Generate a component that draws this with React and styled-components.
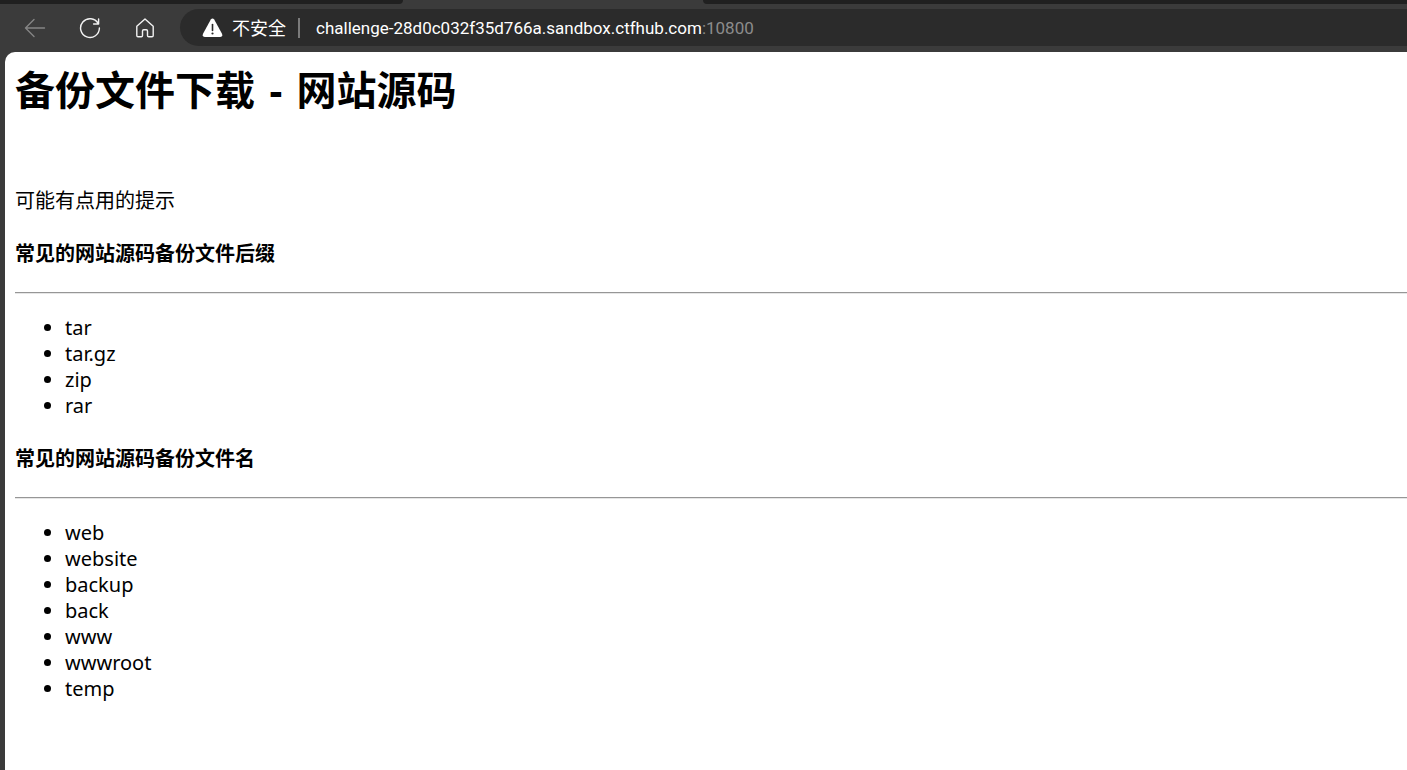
import React from 'react'
import styled, { createGlobalStyle } from 'styled-components'

const GlobalStyle = createGlobalStyle`
  * {
    box-sizing: border-box;
  }

  body {
    margin: 0;
    background: #3b3b3b;
    font-family: "Noto Sans", "Noto Sans CJK SC", sans-serif;
  }
`

const Window = styled.div`
  display: flex;
  flex-direction: column;
  min-height: 100vh;
  overflow: hidden;
`

const TabStrip = styled.div`
  display: flex;
  height: 4px;
`

const TabGap = styled.div`
  flex: ${({ $width }) => $width ? `0 0 ${$width}` : '1'};
  background: #202020;
  border-radius: ${({ $side }) => $side === 'left' ? '0 0 4px 0' : '0 0 0 4px'};
`

const ActiveTab = styled.div`
  flex: 0 0 300px;
`

const Toolbar = styled.nav`
  display: flex;
  align-items: center;
  height: 48px;
  padding: 0 0 1px 20px;
`

const ToolButton = styled.button`
  display: flex;
  align-items: center;
  justify-content: center;
  width: 30px;
  height: 31px;
  margin-right: 25px;
  padding: 0;
  border: 0;
  background: none;
  color: #f2f2f2;

  &:disabled {
    color: #858585;
  }
`

const AddressBar = styled.div`
  display: flex;
  flex: 1;
  align-items: center;
  height: 37px;
  margin-left: -5px;
  padding-left: 22px;
  border-radius: 19px 0 0 19px;
  background: #2b2b2b;
  color: #fff;
  font-size: 18px;
  line-height: 24px;
  white-space: nowrap;
`

const Security = styled.button`
  display: flex;
  align-items: center;
  gap: 9px;
  padding: 0;
  border: 0;
  background: none;
  color: #fff;
  font: inherit;
`

const Divider = styled.span`
  width: 2px;
  height: 20px;
  margin: 0 16px 0 12px;
  background: #7b7b7b;
`

const Url = styled.div`
  flex: 1;
  font-family: Roboto, sans-serif;
  font-size: 17px;
  outline: none;
`

const Port = styled.span`
  color: #8c8c8c;
`

const Page = styled.main`
  flex: 1;
  margin-left: 5px;
  padding: 11px 0 20px 10px;
  border-radius: 10px 0 0 0;
  background: #fff;
  color: #000;
  font-size: 20px;
  line-height: 26px;
`

const Title = styled.h1`
  margin: 0 0 71px;
  font-size: 40px;
  line-height: 54px;
`

const Dash = styled.span`
  margin: 0 4px;
`

const Hint = styled.p`
  margin: 0;
`

const SectionTitle = styled.h4`
  margin: 27px 0 25px;
  font-size: 20px;
`

const Rule = styled.hr`
  height: 2px;
  margin: 0 0 21px;
  border: 0;
  border-top: 1px solid #969696;
  border-bottom: 1px solid #e6e6e6;
`

const List = styled.ul`
  margin: 0;
  padding-left: 50px;
`

const suffixes = ['tar', 'tar.gz', 'zip', 'rar']
const names = ['web', 'website', 'backup', 'back', 'www', 'wwwroot', 'temp']

const Icon = ({ children }) => <svg
  width="22"
  height="22"
  viewBox="0 0 22 22"
  fill="none"
  stroke="currentColor"
  strokeWidth="1.4"
  strokeLinecap="round"
  strokeLinejoin="round"
  aria-hidden="true">
  {children}
</svg>

const BackIcon = () => <Icon>
  <path d="M10 2.5 1.5 11l8.5 8.5M1.5 11H20.5"/>
</Icon>

const ReloadIcon = () => <Icon>
  <path d="M19.2 6.5A9.4 9.4 0 1 0 20.4 11M19.6 2v5h-5"/>
</Icon>

const HomeIcon = () => <Icon>
  <path d="M2.8 9.2 11 2l8.2 7.2v9.3q0 1.2-1.2 1.2h-3.3q-1.2 0-1.2-1.2V14q0-1.2-1.2-1.2H9.7q-1.2 0-1.2 1.2v4.5q0 1.2-1.2 1.2H4q-1.2 0-1.2-1.2Z"/>
</Icon>

const WarningIcon = () => <svg width="21" height="20" viewBox="0 0 21 20" aria-hidden="true">
  <path d="M8.8 1.6q1.7-2.4 3.4 0l7.8 14.2q1 3-1.8 3.2H2.8Q0 18.800 1 15.800Z" fill="#fff"/>
  <path d="M10.500 6.500v6" stroke="#2b2b2b" strokeWidth="1.6" strokeLinecap="round"/>
  <circle cx="10.500" cy="15.500" r="1.1" fill="#2b2b2b"/>
</svg>

const Section = ({ title, items }) => <section>
  <SectionTitle>{title}</SectionTitle>
  <Rule/>
  <List>
    {items.map(item => <li key={item}>{item}</li>)}
  </List>
</section>

const Browser = ({ host, port, children }) => <Window>
  <TabStrip>
    <TabGap $width="403px" $side="left"/>
    <ActiveTab/>
    <TabGap $side="right"/>
  </TabStrip>
  <Toolbar>
    <ToolButton aria-label="后退" disabled><BackIcon/></ToolButton>
    <ToolButton aria-label="刷新"><ReloadIcon/></ToolButton>
    <ToolButton aria-label="主页"><HomeIcon/></ToolButton>
    <AddressBar>
      <Security><WarningIcon/>不安全</Security>
      <Divider/>
      <Url role="textbox" aria-label="地址栏" contentEditable suppressContentEditableWarning spellCheck={false}>
        {host}<Port>:{port}</Port>
      </Url>
    </AddressBar>
  </Toolbar>
  {children}
</Window>

const App = () => <>
  <GlobalStyle/>
  <Browser host="challenge-28d0c032f35d766a.sandbox.ctfhub.com" port="10800">
    <Page>
      <Title>备份文件下载 <Dash>-</Dash> 网站源码</Title>
      <Hint>可能有点用的提示</Hint>
      <Section title="常见的网站源码备份文件后缀" items={suffixes}/>
      <Section title="常见的网站源码备份文件名" items={names}/>
    </Page>
  </Browser>
</>

export default App
